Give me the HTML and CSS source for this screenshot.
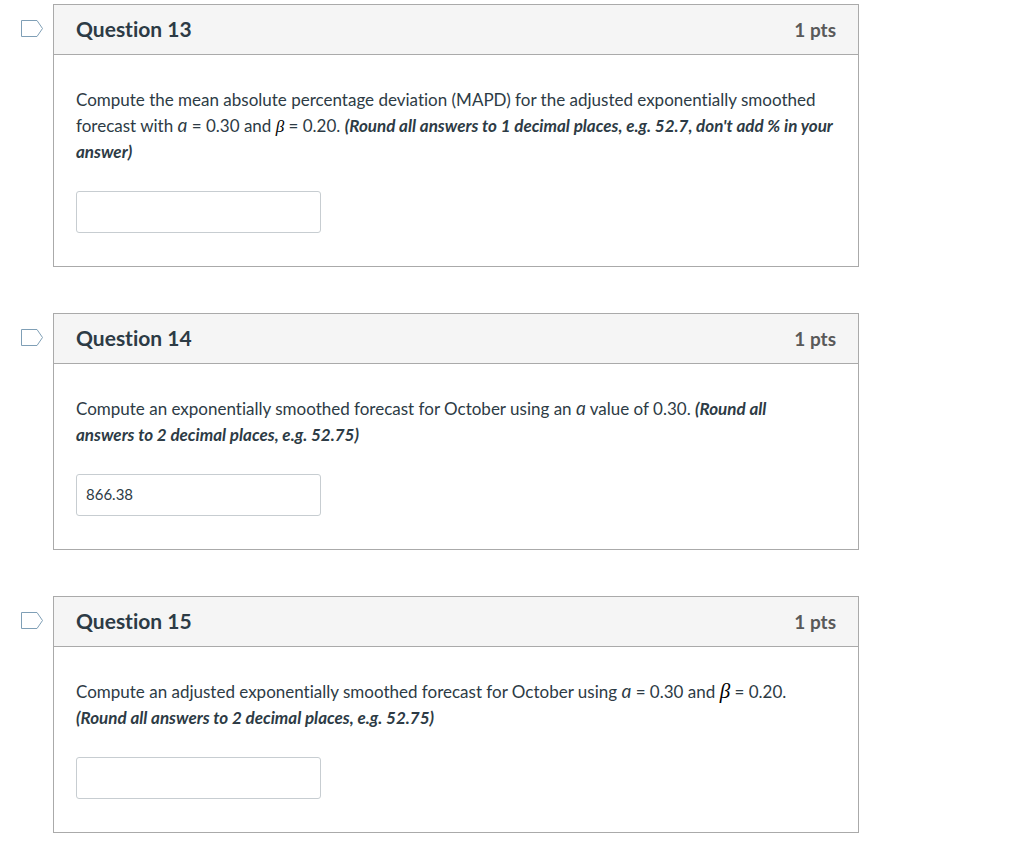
FILE: index.html
```html
<!DOCTYPE html>
<html lang="en">
<head>
  <meta charset="UTF-8">
  <meta name="viewport" content="width=device-width, initial-scale=1.0">
  <title>Quiz</title>
  <link rel="stylesheet" href="styles.css">
</head>
<body>
  <main class="questions">
    <!-- Question 13 -->
    <section class="question-row">
      <button class="flag-question" aria-label="Flag question 13">
        <svg width="24" height="20" viewBox="0 0 24 20"><path d="M1.5 2.5H17L22.5 10.5L17 18.5H1.5Z" /></svg>
      </button>
      <div class="question">
        <div class="question-header">
          <h2>Question 13</h2>
          <span class="points">1 pts</span>
        </div>
        <div class="question-body">
          <label for="answer-13">Compute the mean absolute percentage deviation (MAPD) for the adjusted exponentially smoothed forecast with <i class="alpha">ɑ</i> = 0.30 and <i class="beta">β</i> = 0.20. <strong>(Round all answers to 1 decimal places, e.g. 52.7, don't add % in your answer)</strong></label>
          <input type="text" id="answer-13" class="answer">
        </div>
      </div>
    </section>

    <!-- Question 14 -->
    <section class="question-row">
      <button class="flag-question" aria-label="Flag question 14">
        <svg width="24" height="20" viewBox="0 0 24 20"><path d="M1.5 2.5H17L22.5 10.5L17 18.5H1.5Z" /></svg>
      </button>
      <div class="question">
        <div class="question-header">
          <h2>Question 14</h2>
          <span class="points">1 pts</span>
        </div>
        <div class="question-body">
          <label for="answer-14">Compute an exponentially smoothed forecast for October using an <i class="alpha">ɑ</i> value of 0.30. <strong>(Round all<br>answers to 2 decimal places, e.g. 52.75)</strong></label>
          <input type="text" id="answer-14" class="answer" value="866.38">
        </div>
      </div>
    </section>

    <!-- Question 15 -->
    <section class="question-row">
      <button class="flag-question" aria-label="Flag question 15">
        <svg width="24" height="20" viewBox="0 0 24 20"><path d="M1.5 2.5H17L22.5 10.5L17 18.5H1.5Z" /></svg>
      </button>
      <div class="question">
        <div class="question-header">
          <h2>Question 15</h2>
          <span class="points">1 pts</span>
        </div>
        <div class="question-body">
          <label for="answer-15">Compute an adjusted exponentially smoothed forecast for October using <i class="alpha">ɑ</i> = 0.30 and <i class="beta beta-large">β</i> = 0.20. <strong>(Round all answers to 2 decimal places, e.g. 52.75)</strong></label>
          <input type="text" id="answer-15" class="answer">
        </div>
      </div>
    </section>
  </main>
</body>
</html>
```

FILE: styles.css
```css
* {
  box-sizing: border-box;
}
body {
  margin: 0;
  background: #fff;
  color: #2d3b45;
  font-family: Lato, "Liberation Sans", sans-serif;
  font-size: 17px;
  font-variant-ligatures: none;
  line-height: 26px;
}
.questions {
  display: flex;
  flex-direction: column;
  gap: 46px;
  max-width: 859px;
  padding: 4px 0 22px 20px;
}
.question-row {
  display: flex;
  align-items: flex-start;
  gap: 9px;
}
.flag-question {
  display: flex;
  margin: 0;
  padding: 14px 0 0;
  border: none;
  background: none;
  cursor: pointer;
}
.flag-question path {
  fill: #fff;
  stroke: #7f9fb6;
  stroke-width: 1;
}
.question {
  flex: 1;
  border: 1px solid #aaa;
}
.question-header {
  display: flex;
  align-items: center;
  justify-content: space-between;
  height: 50px;
  padding: 0 22px;
  background: #f5f5f5;
  border-bottom: 1px solid #aaa;
}
.question-header h2 {
  margin: 0;
  padding-bottom: 2px;
  font-size: 21px;
  font-weight: bold;
}
.points {
  color: #595959;
  font-size: 19px;
  font-weight: bold;
}
.question-body {
  padding: 32px 22px 33px;
}
.question-body label {
  display: block;
  margin-bottom: 26px;
}
.question-body strong {
  font-style: italic;
}
.alpha {
  font-size: 19px;
  line-height: 1;
}
.beta {
  color: #000;
  font-family: "Liberation Serif", serif;
  line-height: 1;
}
.beta-large {
  font-size: 21px;
}
.answer {
  display: block;
  width: 245px;
  height: 42px;
  padding: 0 9px 2px;
  border: 1px solid #c7cdd1;
  border-radius: 3px;
  color: #2d3b45;
  font-family: inherit;
  font-size: 15px;
}
```
